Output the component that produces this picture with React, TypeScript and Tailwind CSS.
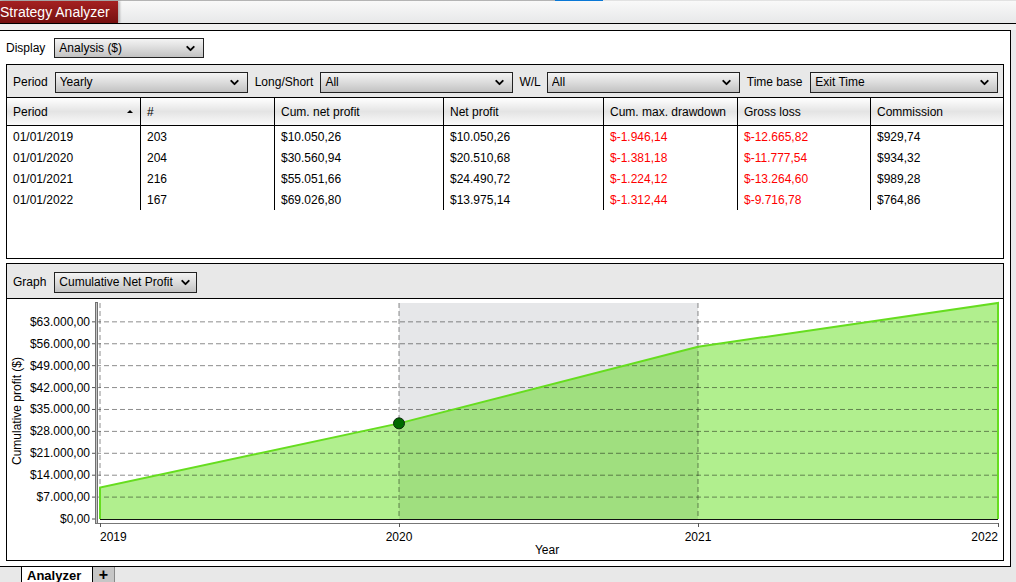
import React from 'react';
import { ChevronDown } from 'lucide-react';

const rows = [
  { period: '01/01/2019', n: '203', cum: '$10.050,26', net: '$10.050,26', dd: '$-1.946,14', gross: '$-12.665,82', comm: '$929,74' },
  { period: '01/01/2020', n: '204', cum: '$30.560,94', net: '$20.510,68', dd: '$-1.381,18', gross: '$-11.777,54', comm: '$934,32' },
  { period: '01/01/2021', n: '216', cum: '$55.051,66', net: '$24.490,72', dd: '$-1.224,12', gross: '$-13.264,60', comm: '$989,28' },
  { period: '01/01/2022', n: '167', cum: '$69.026,80', net: '$13.975,14', dd: '$-1.312,44', gross: '$-9.716,78', comm: '$764,86' },
];

const headers = ['Period', '#', 'Cum. net profit', 'Net profit', 'Cum. max. drawdown', 'Gross loss', 'Commission'];
const colW = ['w-[134px]', 'w-[134px]', 'w-[169px]', 'w-[160px]', 'w-[134px]', 'w-[133px]', 'w-[132px]'];

function Select({ value, className }: { value: string; className: string }) {
  return (
    <div
      className={`${className} h-[21px] flex items-center justify-between pl-[4px] pr-[6px] border border-[#222] bg-gradient-to-b from-[#f4f4f4] via-[#dcdcdc] to-[#c2c2c2] text-[12px] text-black`}
    >
      <span className="truncate">{value}</span>
      <ChevronDown size={13} strokeWidth={3.5} className="text-black shrink-0" />
    </div>
  );
}

// chart geometry (svg coords, origin at page 7,299)
const X0 = 93;
const X1 = 991;
const Y0 = 220;
const YT = 4;
const maxV = 69026.8;
const yOf = (v: number) => Y0 - (v / maxV) * (Y0 - YT);
const xs = [93, 392, 691, 991];
const vals = [10050.26, 30560.94, 55051.66, 69026.8];
const yLabels = ['$0,00', '$7.000,00', '$14.000,00', '$21.000,00', '$28.000,00', '$35.000,00', '$42.000,00', '$49.000,00', '$56.000,00', '$63.000,00'];

function Chart() {
  const pts = xs.map((x, i) => `${x},${yOf(vals[i]).toFixed(2)}`).join(' ');
  const fill = `${X0},${Y0} ${pts} ${X1},${Y0}`;
  const mid = `392,${Y0} 392,${yOf(vals[1]).toFixed(2)} 691,${yOf(vals[2]).toFixed(2)} 691,${Y0}`;
  return (
    <svg width={996} height={261} className="block" fontFamily="'Liberation Sans', Arial, sans-serif" fontSize={12}>
      <rect x={392} y={YT} width={299} height={Y0 - YT} fill="#e6e7e9" />
      <polygon points={fill} fill="#b1ef8e" />
      <polygon points={mid} fill="#a0df7f" />
      {yLabels.map((_, k) =>
        k === 0 ? null : (
          <line key={k} x1={89} x2={X1} y1={yOf(k * 7000)} y2={yOf(k * 7000)} stroke="#000" strokeOpacity={0.45} strokeDasharray="5 3" />
        )
      )}
      {[93, 392, 691].map((x) => (
        <line key={x} x1={x} x2={x} y1={YT} y2={Y0} stroke="#000" strokeOpacity={0.45} strokeDasharray="5 3" />
      ))}
      <polyline points={fill} fill="none" stroke="#66dd1f" strokeWidth={2} />
      <line x1={X0} x2={X1} y1={Y0 + 0.5} y2={Y0 + 0.5} stroke="#111" />
      <rect x={88.5} y={3.5} width={2} height={221} fill="#c4c4c4" stroke="#707070" />
      {yLabels.map((l, k) => (
        <g key={l}>
          <line x1={85} x2={88} y1={yOf(k * 7000)} y2={yOf(k * 7000)} stroke="#555" />
          <text x={83} y={yOf(k * 7000) + 4} textAnchor="end" fill="#000">
            {l}
          </text>
        </g>
      ))}
      <line x1={89} x2={X1} y1={224.5} y2={224.5} stroke="#777" />
      {xs.map((x) => (
        <line key={x} x1={x + 0.5} x2={x + 0.5} y1={224} y2={228} stroke="#555" />
      ))}
      <circle cx={392} cy={yOf(vals[1])} r={5.5} fill="#006a00" stroke="#0c2a0c" />
      <text x={93} y={242} textAnchor="start">2019</text>
      <text x={392} y={242} textAnchor="middle">2020</text>
      <text x={691} y={242} textAnchor="middle">2021</text>
      <text x={991} y={242} textAnchor="end">2022</text>
      <text x={540} y={255} textAnchor="middle">Year</text>
      <text transform="translate(14,112) rotate(-90)" textAnchor="middle">
        Cumulative profit ($)
      </text>
    </svg>
  );
}

export default function App() {
  return (
    <div className="w-[1016px] h-[582px] overflow-hidden bg-[#e8e9eb] font-['Liberation_Sans',Arial,sans-serif] text-black">
      {/* top tab bar */}
      <div className="h-[24px] flex flex-col border-b border-black">
        <div className="h-px flex shrink-0">
          <div className="w-[555px] bg-[#b4b4b4]" />
          <div className="w-[48px] bg-[#0a78d6]" />
          <div className="flex-1 bg-[#e2e2e2]" />
        </div>
        <div className="flex-1 flex bg-gradient-to-b from-[#f9f9f9] to-[#e7e8e9]">
          <div className="w-[118px] h-[22px] bg-gradient-to-b from-[#a52121] to-[#761010] text-white text-[14px] leading-[22px] shadow-[2px_0_2px_rgba(0,0,0,0.25)]">
            Strategy Analyzer
          </div>
        </div>
      </div>
      <div className="h-[6px] bg-[#f0f0f0]" />

      {/* outer panel */}
      <div className="w-[1011px] h-[537px] bg-white border border-l-0 border-black px-[6px] pt-[7px] flex flex-col">
        <div className="h-[20px] flex items-center text-[12px]">
          <span>Display</span>
          <Select value="Analysis ($)" className="w-[150px] !h-[20px] ml-[9px]" />
        </div>

        {/* table panel */}
        <div className="mt-[6px] h-[195px] border border-black flex flex-col">
          <div className="h-[33px] pt-[2px] border-b border-black bg-[#e8e8e8] flex items-center pl-[6px] text-[12px]">
            <span>Period</span>
            <Select value="Yearly" className="w-[193px] ml-[7px]" />
            <span className="ml-[7px]">Long/Short</span>
            <Select value="All" className="w-[193px] ml-[7px]" />
            <span className="ml-[6px]">W/L</span>
            <Select value="All" className="w-[193px] ml-[6px]" />
            <span className="ml-[7px]">Time base</span>
            <Select value="Exit Time" className="w-[188px] ml-[8px]" />
          </div>
          <div className="h-[28px] flex border-b border-black bg-gradient-to-b from-white via-[#e4e4e4] to-[#fafafa] text-[12px]">
            {headers.map((h, i) => (
              <div
                key={h}
                className={`${colW[i]} flex items-center justify-between pl-[6px] pr-[7px] ${i < 6 ? 'border-r border-black' : ''}`}
              >
                <span>{h}</span>
                {i === 0 && <span className="w-0 h-0 border-l-[3px] border-r-[3px] border-b-[3px] border-l-transparent border-r-transparent border-b-black" />}
              </div>
            ))}
          </div>
          {rows.map((r) => {
            const cells = [r.period, r.n, r.cum, r.net, r.dd, r.gross, r.comm];
            return (
              <div key={r.period} className="h-[21px] flex text-[12px]">
                {cells.map((c, i) => (
                  <div
                    key={i}
                    className={`${colW[i]} flex items-center pl-[6px] ${i < 6 ? 'border-r border-black' : ''} ${i === 4 || i === 5 ? 'text-[#ff0000]' : ''}`}
                  >
                    {c}
                  </div>
                ))}
              </div>
            );
          })}
        </div>

        {/* graph panel */}
        <div className="mt-[4px] h-[298px] border border-black flex flex-col">
          <div className="h-[35px] pt-[2px] border-b border-black bg-[#e8e8e8] flex items-center pl-[6px] text-[12px]">
            <span>Graph</span>
            <Select value="Cumulative Net Profit" className="w-[143px] ml-[8px] !pr-[4px]" />
          </div>
          <Chart />
        </div>
      </div>

      {/* bottom tab strip */}
      <div className="h-[15px] flex bg-[#e8e8e8]">
        <div className="w-[21px]" />
        <div className="w-[72px] bg-white border-l border-r border-black pl-[5px] text-[13px] font-bold leading-[17px]">
          Analyzer
        </div>
        <div className="w-[22px] bg-[#c6c6c6] border-r border-[#888] flex justify-center text-[16px] font-bold leading-[15px]">
          +
        </div>
      </div>
    </div>
  );
}
